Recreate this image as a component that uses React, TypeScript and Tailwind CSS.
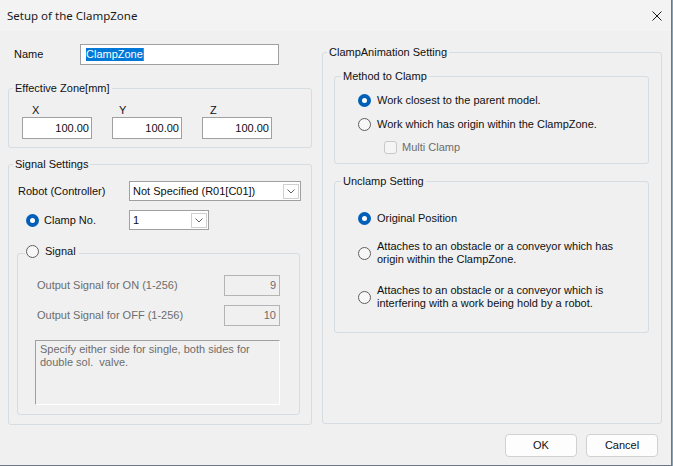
import type { ReactNode } from "react";

const ui = "font-['Liberation_Sans',Arial,sans-serif] text-[11px] leading-[13px] text-[#101010]";
const group = "rounded-[3px] border border-[#d5dce2]";

function Radio({ checked }: { checked?: boolean }) {
  return checked ? (
    <span className="flex h-[13px] w-[13px] shrink-0 items-center justify-center rounded-full bg-[#005fb8]">
      <span className="h-[5px] w-[5px] rounded-full bg-white" />
    </span>
  ) : (
    <span className="h-[13px] w-[13px] shrink-0 rounded-full border border-[#5f5f5f] bg-[#f7f7f7]" />
  );
}

function Chevron() {
  return (
    <svg width="8" height="5" viewBox="0 0 8 5">
      <path d="M0.5 0.5 L4 4 L7.5 0.5" fill="none" stroke="#606060" strokeWidth="1" />
    </svg>
  );
}

function Combo({ value, className }: { value: string; className: string }) {
  return (
    <div className={`flex h-[20px] items-center justify-between border border-[#a0a0a0] bg-white pl-[3px] pr-[1px] ${className}`}>
      <span>{value}</span>
      <span className="flex h-[15px] w-[16px] items-center justify-center border border-[#cfcfcf] bg-white">
        <Chevron />
      </span>
    </div>
  );
}

function NumBox({ value }: { value: string }) {
  return (
    <div className="flex h-[22px] w-[70px] items-center justify-end border border-[#a0a0a0] bg-white pr-[2px]">
      {value}
    </div>
  );
}

function DisabledBox({ value }: { value: string }) {
  return (
    <div className="flex h-[21px] w-[56px] items-center justify-end border border-[#b4b4b4] bg-[#f0f0f0] pr-[3px] text-[#6d6d6d]">
      {value}
    </div>
  );
}

function Legend({ children, className }: { children: ReactNode; className: string }) {
  return <legend className={`leading-[13px] ${className}`}>{children}</legend>;
}

function Button({ label }: { label: string }) {
  return (
    <button className="flex h-[23px] w-[72px] items-center justify-center rounded-[4px] border border-[#d1d1d1] bg-[#fdfdfd]">
      {label}
    </button>
  );
}

export default function App() {
  return (
    <div className="h-[466px] w-[673px] bg-[#8aa4b4]">
      <div className={`flex h-[466px] w-[672px] flex-col border-r border-b border-[#6b7785] bg-[#f0f0f0] ${ui}`}>
        <div className="flex h-[31px] shrink-0 items-center justify-between bg-[#f3f3f3] pl-[7px] pr-[9px]">
          <span className="font-['Noto_Sans',sans-serif] text-[11.5px] text-[#1b1b1b]">Setup of the ClampZone</span>
          <svg width="10" height="10" viewBox="0 0 10 10">
            <path d="M0.5 0.5 L9.5 9.5 M9.5 0.5 L0.5 9.5" stroke="#1b1b1b" strokeWidth="1" />
          </svg>
        </div>

        <div className="flex gap-[10px] pl-[8px]">
          {/* left column */}
          <div className="flex w-[304px] flex-col">
            <div className="mt-[13px] flex h-[21px] items-center">
              <span className="w-[72px] pl-[6px]">Name</span>
              <div className="flex h-[21px] w-[199px] items-center border border-[#a0a0a0] bg-white pl-[5px]">
                <span className="bg-[#0078d7] text-white">ClampZone</span>
                <span className="h-[13px] w-[1px] bg-[#c8702e]" />
              </div>
            </div>

            <fieldset className={`mt-[17px] h-[66px] ${group}`}>
              <Legend className="ml-[4px] px-[2px]">Effective Zone[mm]</Legend>
              <div className="flex gap-[20px] pl-[13px] pt-[9px]">
                <div className="flex flex-col">
                  <span className="pl-[10px]">X</span>
                  <NumBox value="100.00" />
                </div>
                <div className="flex flex-col">
                  <span className="pl-[7px]">Y</span>
                  <NumBox value="100.00" />
                </div>
                <div className="flex flex-col">
                  <span className="pl-[8px]">Z</span>
                  <NumBox value="100.00" />
                </div>
              </div>
            </fieldset>

            <fieldset className={`mt-[10px] h-[267px] ${group}`}>
              <Legend className="ml-[4px] px-[2px]">Signal Settings</Legend>
              <div className="flex flex-col pt-[10px]">
                <div className="flex items-center pl-[9px]">
                  <span className="w-[111px]">Robot (Controller)</span>
                  <Combo value="Not Specified (R01[C01])" className="w-[172px]" />
                </div>
                <div className="mt-[9px] flex items-center pl-[17px]">
                  <div className="flex w-[103px] items-center gap-[5px]">
                    <Radio checked />
                    <span>Clamp No.</span>
                  </div>
                  <Combo value="1" className="w-[80px]" />
                </div>

                <fieldset className={`ml-[8px] mt-[15px] h-[170px] w-[283px] ${group}`}>
                  <Legend className="ml-[7px] px-[1px]">
                    <span className="inline-flex items-center gap-[6px] pr-[2px]">
                      <Radio />
                      <span>Signal</span>
                    </span>
                  </Legend>
                  <div className="flex flex-col pt-[14px] text-[#6d6d6d]">
                    <div className="flex items-center pl-[19px]">
                      <span className="w-[187px]">Output Signal for ON (1-256)</span>
                      <DisabledBox value="9" />
                    </div>
                    <div className="mt-[9px] flex items-center pl-[19px]">
                      <span className="w-[187px]">Output Signal for OFF (1-256)</span>
                      <DisabledBox value="10" />
                    </div>
                    <div className="ml-[17px] mt-[14px] h-[65px] w-[245px] whitespace-pre border border-[#a0a0a0] border-r-white border-b-white px-[4px] pt-[2px]">
                      Specify either side for single, both sides for
                      <br />
                      {"double sol.  valve."}
                    </div>
                  </div>
                </fieldset>
              </div>
            </fieldset>
          </div>

          {/* right column */}
          <div className="mt-[15px] flex w-[340px] flex-col">
            <fieldset className={`h-[378px] ${group}`}>
              <Legend className="ml-[4px] px-[2px]">ClampAnimation Setting</Legend>

              <fieldset className={`ml-[11px] mt-[11px] h-[94px] w-[315px] ${group}`}>
                <Legend className="ml-[6px] px-[2px]">Method to Clamp</Legend>
                <div className="flex flex-col pl-[23px] pt-[11px]">
                  <div className="flex items-center gap-[6px]">
                    <Radio checked />
                    <span>Work closest to the parent model.</span>
                  </div>
                  <div className="mt-[11px] flex items-center gap-[6px]">
                    <Radio />
                    <span>Work which has origin within the ClampZone.</span>
                  </div>
                  <div className="mt-[10px] flex items-center gap-[5px] pl-[26px] text-[#6d6d6d]">
                    <span className="h-[13px] w-[13px] rounded-[3px] border border-[#c8c8c8] bg-[#f5f5f5]" />
                    <span>Multi Clamp</span>
                  </div>
                </div>
              </fieldset>

              <fieldset className={`ml-[11px] mt-[11px] h-[158px] w-[315px] ${group}`}>
                <Legend className="ml-[6px] px-[2px]">Unclamp Setting</Legend>
                <div className="flex flex-col pl-[23px] pt-[24px]">
                  <div className="flex items-center gap-[6px]">
                    <Radio checked />
                    <span>Original Position</span>
                  </div>
                  <div className="mt-[15px] flex items-center gap-[6px]">
                    <Radio />
                    <span>
                      Attaches to an obstacle or a conveyor which has
                      <br />
                      origin within the ClampZone.
                    </span>
                  </div>
                  <div className="mt-[18px] flex items-center gap-[6px]">
                    <Radio />
                    <span>
                      Attaches to an obstacle or a conveyor which is
                      <br />
                      interfering with a work being hold by a robot.
                    </span>
                  </div>
                </div>
              </fieldset>
            </fieldset>
          </div>
        </div>

        <div className="mt-[9px] flex justify-end gap-[9px] pr-[13px]">
          <Button label="OK" />
          <Button label="Cancel" />
        </div>
      </div>
    </div>
  );
}
